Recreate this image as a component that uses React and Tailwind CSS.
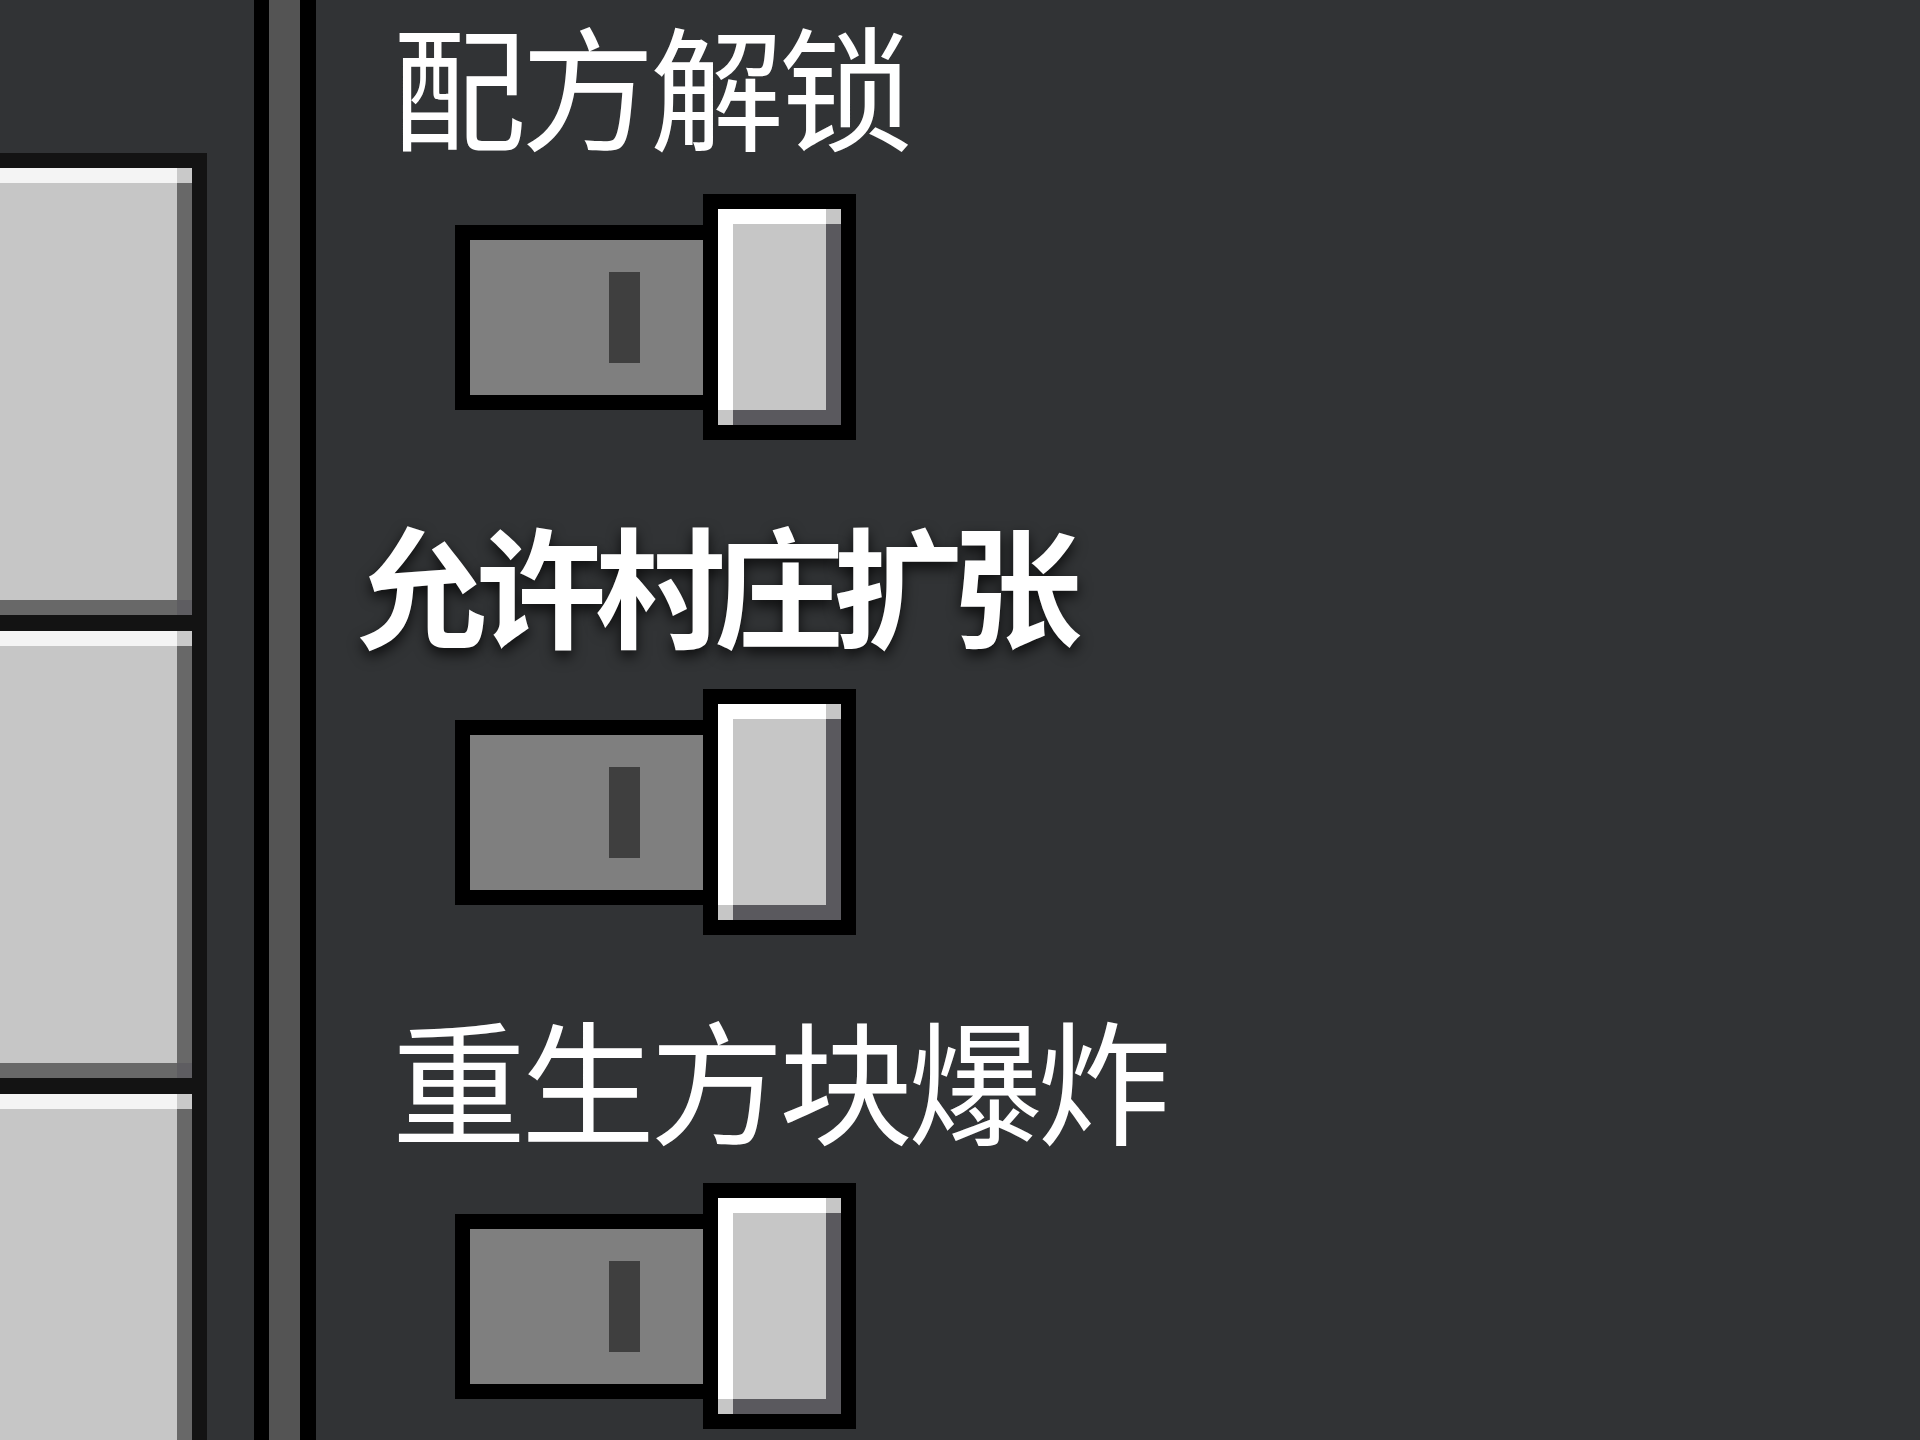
import React from 'react';

// Bouton de la colonne gauche (style Minecraft)
const SideButton = () => (
  <div className="shrink-0 border-b-[16px] border-[#131313]">
    <div className="flex flex-col h-[447px]">
      <div className="flex h-[15px]">
        <div className="flex-1 bg-[#f4f4f4]" />
        <div className="w-[15px] bg-[#c9c9c9]" />
      </div>
      <div className="flex flex-1">
        <div className="flex-1 bg-[#c6c6c6]" />
        <div className="w-[15px] bg-[#686868]" />
      </div>
      <div className="flex h-[15px]">
        <div className="flex-1 bg-[#686868]" />
        <div className="w-[15px] bg-[#5e5d61]" />
      </div>
    </div>
  </div>
);

// Interrupteur en position "off"
const Toggle = () => (
  <div className="flex items-center ml-[139px] shrink-0">
    <div className="w-[248px] h-[185px] bg-black pl-[15px] py-[15px]">
      <div className="h-full bg-[#7f7f7f] pl-[139px] pt-[32px]">
        <div className="w-[31px] h-[91px] bg-[#3f3f3f]" />
      </div>
    </div>
    <div className="w-[153px] h-[246px] bg-black p-[15px]">
      <div className="flex flex-col h-full">
        <div className="flex h-[15px]">
          <div className="flex-1 bg-white" />
          <div className="w-[15px] bg-[#c6c6c6]" />
        </div>
        <div className="flex flex-1">
          <div className="w-[15px] bg-white" />
          <div className="flex-1 bg-[#c6c6c6]" />
          <div className="w-[15px] bg-[#5a595e]" />
        </div>
        <div className="flex h-[15px]">
          <div className="w-[15px] bg-[#c6c6c6]" />
          <div className="flex-1 bg-[#5a595e]" />
        </div>
      </div>
    </div>
  </div>
);

const rows = [
  { label: '配方解锁', wrap: 'pt-[16px] gap-[44px]', text: 'ml-[76px] text-[134px] tracking-[-5px]' },
  { label: '允许村庄扩张', wrap: 'pt-[22px] gap-[43px]', text: 'ml-[41px] text-[130px] tracking-[-11px] font-bold [text-shadow:0_6px_14px_rgba(0,0,0,0.75)]' },
  { label: '重生方块爆炸', wrap: 'pt-[22px] gap-[39px]', text: 'ml-[76px] text-[134px] tracking-[-5px]' },
];

export default function App() {
  return (
    <div
      className="w-[1920px] h-[1440px] overflow-hidden flex bg-[#313335] text-white"
      style={{ fontFamily: '"Noto Sans CJK SC", "Noto Sans", sans-serif' }}
    >
      {/* Colonne de boutons */}
      <div className="w-[207px] pt-[153px] shrink-0">
        <div className="border-t-[15px] border-r-[15px] border-[#131313]">
          <SideButton />
          <SideButton />
          <SideButton />
        </div>
      </div>

      <div className="w-[47px] shrink-0" />

      {/* Barre de défilement */}
      <div className="w-[62px] shrink-0 bg-[#545454] border-l-[15px] border-r-[16px] border-black" />

      {/* Panneau des options */}
      <div className="flex-1 flex flex-col">
        {rows.map(row => (
          <div key={row.label} className={`h-[494px] shrink-0 flex flex-col ${row.wrap}`}>
            <div className={`leading-none whitespace-nowrap shrink-0 ${row.text}`}>{row.label}</div>
            <Toggle />
          </div>
        ))}
      </div>
    </div>
  );
}
